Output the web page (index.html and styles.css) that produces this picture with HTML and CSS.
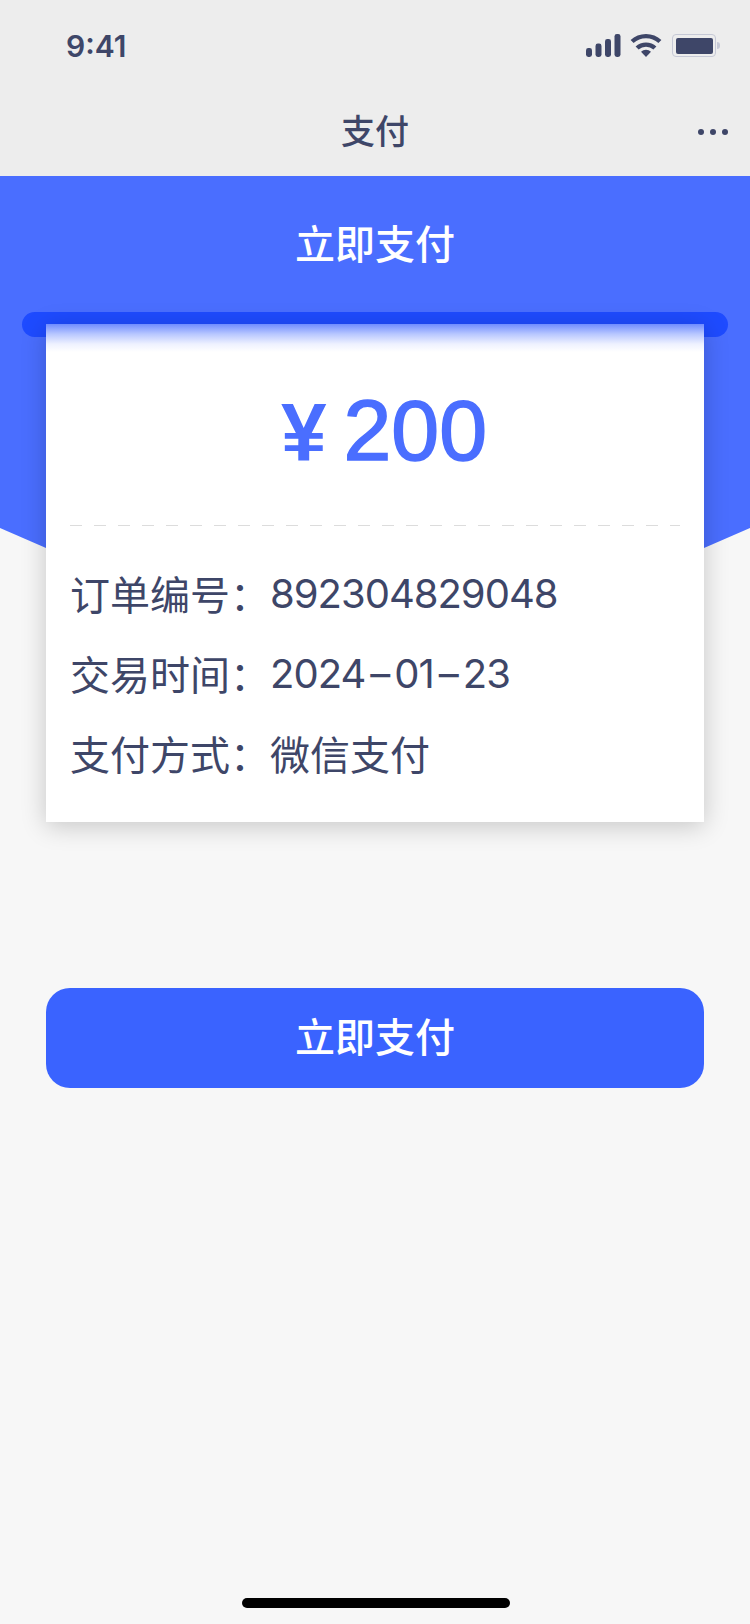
FILE: index.html
```html
<!DOCTYPE html>
<html lang="zh-CN">
<head>
<meta charset="utf-8">
<title>支付</title>
<link rel="stylesheet" href="styles.css">
</head>
<body>
<div class="page">
  <header class="top">
    <div class="status">
      <span class="time">9:41</span>
      <div class="status-icons">
        <svg class="i-signal" width="35" height="23" viewBox="0 0 35 23"><rect x="0" y="14" width="6" height="9" rx="2.4"/><rect x="9.5" y="9.5" width="6" height="13.5" rx="2.4"/><rect x="19" y="5" width="6" height="18" rx="2.4"/><rect x="28.5" y="0" width="6" height="23" rx="2.4"/></svg>
        <svg class="i-wifi" width="32" height="23" viewBox="0 0 32 23"><path d="M16 23l-5-5.3a7.4 7.4 0 0 1 10 0z"/><path d="M16 8.4c4 0 7.6 1.5 10.4 4l-3 3.2A11 11 0 0 0 16 12.7a11 11 0 0 0-7.4 2.9l-3-3.2c2.8-2.5 6.4-4 10.4-4z"/><path d="M16 0c5.9 0 11.3 2.3 15.4 6l-3 3.1A18.3 18.3 0 0 0 16 4.3 18.3 18.3 0 0 0 3.6 9.1l-3-3.1C4.7 2.3 10.1 0 16 0z"/></svg>
        <div class="battery"><div class="battery-body"><div class="battery-fill"></div></div><div class="battery-nub"></div></div>
      </div>
    </div>
    <div class="nav">
      <span></span>
      <h1 class="nav-title">支付</h1>
      <div class="more"><i></i><i></i><i></i></div>
    </div>
  </header>

  <main class="main">
    <div class="hero-bg"></div>
    <h2 class="hero-title">立即支付</h2>
    <div class="slot"></div>
    <section class="card">
      <div class="amount"><span class="yen">¥</span> <span class="digits">200</span></div>
      <div class="dash"></div>
      <dl class="rows">
        <div class="row"><dt>订单编号：</dt><dd class="num">892304829048</dd></div>
        <div class="row"><dt>交易时间：</dt><dd class="num">2024<span class="sep">–</span>01<span class="sep">–</span>23</dd></div>
        <div class="row"><dt>支付方式：</dt><dd>微信支付</dd></div>
      </dl>
    </section>
    <button class="pay">立即支付</button>
  </main>

  <div class="home-wrap"><div class="home"></div></div>
</div>
</body>
</html>
```
FILE: styles.css
```css
* { box-sizing: border-box; margin: 0; padding: 0; }
html, body { width: 750px; height: 1624px; overflow: hidden; }
body {
  background: #f7f7f7;
  font-family: Inter, "Noto Sans CJK SC", sans-serif;
  color: #3e4668;
}
.page { width: 750px; height: 1624px; display: flex; flex-direction: column; }

.top { height: 176px; background: #ededed; flex: none; }
.status {
  height: 88px;
  padding: 30px 30px 0 66px;
  display: flex;
  justify-content: space-between;
  align-items: flex-start;
}
.time { font-size: 30px; line-height: 32px; font-weight: 600; }
.status-icons { display: flex; align-items: flex-start; padding-top: 4px; }
.i-signal, .i-wifi { fill: #3e4668; display: block; }
.i-signal { margin-right: 9px; }
.i-wifi { margin-right: 10px; }
.battery { display: flex; align-items: center; height: 23px; }
.battery-body {
  width: 44px;
  height: 23px;
  border: 1.5px solid #c6c9d6;
  border-radius: 4px;
  padding: 2.5px;
}
.battery-fill { width: 100%; height: 100%; background: #3e4668; border-radius: 2px; }
.battery-nub { width: 3px; height: 7px; background: #c6c9d6; border-radius: 0 3px 3px 0; margin-left: 1px; }

.nav {
  height: 88px;
  display: grid;
  grid-template-columns: 1fr auto 1fr;
  align-items: center;
  padding: 0 22px;
}
.nav-title { font-size: 34px; line-height: 48px; font-weight: 500; }
.more { justify-self: end; display: flex; gap: 6px; margin-top: -1px; }
.more i { width: 6px; height: 6px; border-radius: 50%; background: #3e4668; display: block; }

.main { position: relative; flex: 1; display: flex; flex-direction: column; align-items: center; }
.hero-bg {
  position: absolute;
  left: 0; top: 0;
  width: 750px;
  height: 520px;
  background: #4a6eff;
  clip-path: polygon(0 0, 100% 0, 100% 352px, 50% 515px, 0 352px);
}
.hero-title {
  position: relative;
  font-size: 40px;
  line-height: 56px;
  font-weight: 500;
  color: #fff;
  margin-top: 41px;
}
.slot {
  position: relative;
  width: 706px;
  height: 25px;
  margin-top: 39px;
  background: #1e4bff;
  border-radius: 13px;
  flex: none;
}
.card {
  position: relative;
  width: 658px;
  height: 498px;
  margin-top: -13px;
  background: linear-gradient(180deg, #6f8cff 0, #b8c7ff 10px, #eef1ff 20px, #fff 28px);
  box-shadow: 0 4px 24px rgba(0, 0, 0, .2);
  padding: 0 24px;
  flex: none;
}
.amount {
  text-align: center;
  color: #4a6eff;
  font-family: "Liberation Sans", "Noto Sans CJK SC", sans-serif;
  font-size: 86px;
  line-height: 100px;
  font-weight: 400;
  margin-top: 56px;
  padding-left: 18px;
}
.yen { font-weight: 700; font-size: 82px; letter-spacing: -7px; }
.digits { -webkit-text-stroke: 1.6px #4a6eff; }
.dash {
  height: 1px;
  margin-top: 43px;
  background: repeating-linear-gradient(90deg, #dcdcdc 0 12px, transparent 12px 24px);
}
.rows { margin-top: 27px; }
.row { display: flex; height: 80px; align-items: center; font-size: 40px; font-weight: 400; }
.row .num { letter-spacing: -1px; font-weight: 375; }
.sep { margin: 0 5px; }

.pay {
  position: relative;
  width: 658px;
  height: 100px;
  margin-top: 166px;
  border: 0;
  border-radius: 24px;
  background: #3a63ff;
  color: #fff;
  font-family: inherit;
  font-size: 40px;
  line-height: 56px;
  font-weight: 500;
  flex: none;
}
.home-wrap { position: absolute; left: 2px; right: 0; top: 1598px; display: flex; justify-content: center; }
.home { width: 268px; height: 10px; border-radius: 5px; background: #000; }
```
